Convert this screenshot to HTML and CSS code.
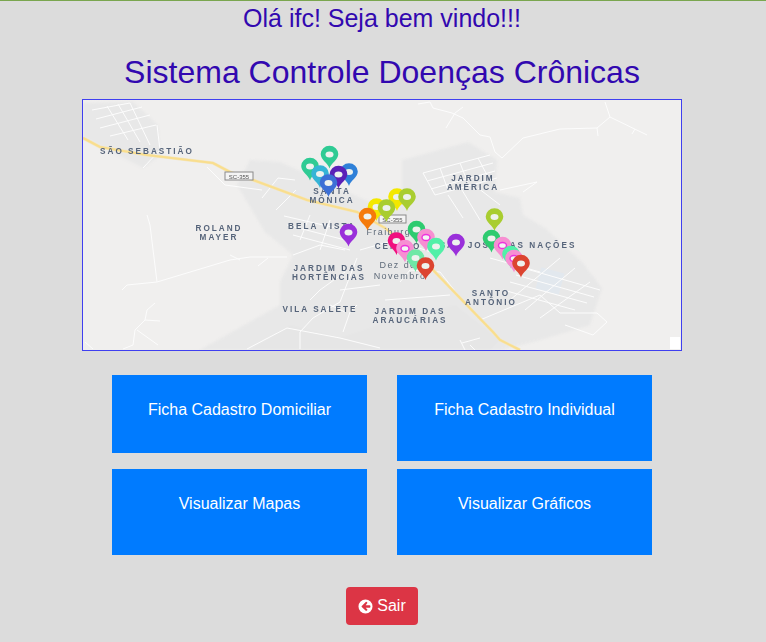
FILE: index.html
```html
<!DOCTYPE html>
<html lang="pt-BR">
<head>
<meta charset="utf-8">
<title>Sistema Controle Doenças Crônicas</title>
<link rel="stylesheet" href="styles.css">
</head>
<body>
<main class="page">
  <h2 class="welcome">Olá ifc! Seja bem vindo!!!</h2>
  <h1 class="title">Sistema Controle Doenças Crônicas</h1>
  <div class="map">
    <svg class="map-svg" viewBox="83 100 598 250" width="598" height="250" xmlns="http://www.w3.org/2000/svg">
      <defs>
        <path id="pin" d="M0 14C-1.500 8.500-8.800 5.500-8.800-.5A8.800 8.300 0 1 1 8.800-.5C8.800 5.500 1.500 8.500 0 14Z"/>
      </defs>
      <rect class="land" x="83" y="100" width="598" height="250"/>
      <g class="soft">
        <path class="zone" d="M83 103 133 102 158 125 161 155 143 168 83 138Z"/>
        <path class="zone" d="M237 185 250 160 280 162 370 202 402 200 402 160 468 142 497 160 495 192 520 198 523 215 545 228 582 262 602 288 590 325 540 340 500 350 200 350 280 305 280 282 293 255 265 232Z"/>
        <path class="zone2" d="M290 325 340 338 400 318 455 305 500 340 490 350 250 350Z"/>
      </g>
      <g class="blur">
        <rect class="pond" x="538" y="270" width="24" height="22" transform="rotate(15 550 281)"/>

        <g class="street">
          <path d="M92 110 130 103M96 119 142 107M100 128 150 115M110 136 156 125M107 106 128 140M118 104 140 142M130 103 150 145M157 125 160 150 143 168"/>
          <path d="M147 215 150 225 157 282M122 290 127 285 157 282 230 260 250 257 287 257M230 255 240 260M258 266 268 258"/>
          <path d="M155 303 147 310 145 320 160 321M145 320 135 330 133 345 123 349M137 330 158 345M85 342 93 349"/>
          <path d="M247 349 287 328 340 338 380 348M300 349 300 332 313 318 340 302 357 258M343 332 350 312 357 305M330 305 345 312M310 300 320 290 345 272"/>
          <path d="M207 167 225 185 262 190M262 198 278 178 295 180M276 210 296 190M287 225 345 240M293 235 350 250M284 216 345 230M310 215 300 240M330 220 320 250M293 255 320 245 345 250"/>
          <path d="M418 104 430 102 433 108 452 113 463 118 480 135 490 137 495 152 502 158M463 107 455 113 446 128"/>
          <path d="M502 158 523 138 560 129 597 128 610 117 605 102M610 117 647 135M635 129 632 134M597 128 598 136"/>
          <path d="M423 173 490 155M427 181 493 163M431 189 495 171M435 195 497 178M423 173 435 195M440 168 448 190M460 163 468 183M478 158 487 175M500 190 537 182 523 192M448 195 463 218M462 190 480 220M478 188 500 205"/>
          <path d="M523 268 600 290M516 275 594 297M510 282 587 303M503 290 575 310M490 258 540 272M560 258 510 300M575 268 525 310M590 282 540 318M480 320 540 295 560 313 597 313 607 322 593 335 565 325"/>
          <path d="M400 282 410 270 440 272 462 300M380 285 340 290M360 250 395 240 440 255M385 300 450 295M460 340 465 350M470 345 475 350M462 343 480 338"/>
        </g>
        <path class="road-edge" d="M83 138 100 147 147 155 213 163 230 172 253 180 280 190 307 200 357 212 385 228 410 248 433 270 460 298 493 332 500 340 520 350"/>
        <path class="road" d="M83 138 100 147 147 155 213 163 230 172 253 180 280 190 307 200 357 212 385 228 410 248 433 270 460 298 493 332 500 340 520 350"/>

        <g class="shield">
          <rect x="225" y="172" width="28" height="8"/>
          <rect x="379" y="215" width="27" height="8"/>
        </g>
        <text class="shield-text" x="239" y="178.500">SC-355</text>
        <text class="shield-text" x="392.500" y="221.500">SC-355</text>

        <g class="label">
          <text x="147" y="154">SÃO SEBASTIÃO</text>
          <text x="332" y="193.500">SANTA</text>
          <text x="332" y="203">MÔNICA</text>
          <text x="473" y="180.500">JARDIM</text>
          <text x="473" y="190">AMÉRICA</text>
          <text x="219" y="230.500">ROLAND</text>
          <text x="219" y="240">MAYER</text>
          <text x="322" y="229">BELA VISTA</text>
          <text x="398" y="249">CENTRO</text>
          <text x="508" y="248">SÃO JOSÉ DAS NAÇÕES</text>
          <text x="329" y="270.500">JARDIM DAS</text>
          <text x="329" y="280">HORTÊNCIAS</text>
          <text x="320" y="312">VILA SALETE</text>
          <text x="410" y="313.500">JARDIM DAS</text>
          <text x="410" y="323">ARAUCÁRIAS</text>
          <text x="491" y="295.500">SANTO</text>
          <text x="491" y="305">ANTÔNIO</text>
        </g>
        <g class="city">
          <text x="392" y="235">Fraiburgo</text>
          <text x="398" y="268">Dez de</text>
          <text x="400" y="278.500">Novembro</text>
        </g>
      </g>

      <g class="pins">
        <g class="p-teal" transform="translate(329.500 154.500)"><use href="#pin"/><ellipse rx="4" ry="3"/></g>
        <g class="p-teal" transform="translate(310 166.500)"><use href="#pin"/><ellipse rx="4" ry="3"/></g>
        <g class="p-cyan" transform="translate(320 174)"><use href="#pin"/><ellipse rx="4" ry="3"/></g>
        <g class="p-blue" transform="translate(349 172)"><use href="#pin"/><ellipse rx="4" ry="3"/></g>
        <g class="p-indigo" transform="translate(338.500 174.500)"><use href="#pin"/><ellipse rx="4" ry="3"/></g>
        <g class="p-azure" transform="translate(328.500 183)"><use href="#pin"/><ellipse rx="4" ry="3"/></g>
        <g class="p-yellow" transform="translate(397 197)"><use href="#pin"/><ellipse rx="4" ry="3"/></g>
        <g class="p-lime" transform="translate(407 197)"><use href="#pin"/><ellipse rx="4" ry="3"/></g>
        <g class="p-yellow" transform="translate(376.500 207)"><use href="#pin"/><ellipse rx="4" ry="3"/></g>
        <g class="p-lime" transform="translate(386.500 208)"><use href="#pin"/><ellipse rx="4" ry="3"/></g>
        <g class="p-orange" transform="translate(367.500 216.500)"><use href="#pin"/><ellipse rx="4" ry="3"/></g>
        <g class="p-purple" transform="translate(348.500 232.500)"><use href="#pin"/><ellipse rx="4" ry="3"/></g>
        <g class="p-lime" transform="translate(494.500 217)"><use href="#pin"/><ellipse rx="4" ry="3"/></g>
        <g class="p-green" transform="translate(416.500 229.500)"><use href="#pin"/><ellipse rx="4" ry="3"/></g>
        <g class="p-green" transform="translate(491.500 238.500)"><use href="#pin"/><ellipse rx="4" ry="3"/></g>
        <g class="p-pink" transform="translate(426 237.500)"><use href="#pin"/><ellipse rx="4" ry="3"/></g>
        <g class="p-purple" transform="translate(456 242.500)"><use href="#pin"/><ellipse rx="4" ry="3"/></g>
        <g class="p-hot" transform="translate(396.500 241)"><use href="#pin"/><ellipse rx="4" ry="3"/></g>
        <g class="p-pink" transform="translate(405 248.500)"><use href="#pin"/><ellipse rx="4" ry="3"/></g>
        <g class="p-mint" transform="translate(436 246.500)"><use href="#pin"/><ellipse rx="4" ry="3"/></g>
        <g class="p-pink" transform="translate(502.500 245.500)"><use href="#pin"/><ellipse rx="4" ry="3"/></g>
        <g class="p-mint" transform="translate(511 254.500)"><use href="#pin"/><ellipse rx="4" ry="3"/></g>
        <g class="p-pink" transform="translate(514 258.500)"><use href="#pin"/><ellipse rx="4" ry="3"/></g>
        <g class="p-seafoam" transform="translate(415.500 258)"><use href="#pin"/><ellipse rx="4" ry="3"/></g>
        <g class="p-red" transform="translate(425.500 266)"><use href="#pin"/><ellipse rx="4" ry="3"/></g>
        <g class="p-red" transform="translate(521 263.500)"><use href="#pin"/><ellipse rx="4" ry="3"/></g>
      </g>
      <rect class="corner" x="670" y="337" width="10" height="12"/>
    </svg>
  </div>

  <nav class="actions">
    <a class="action action-short" href="#">Ficha Cadastro Domiciliar</a>
    <a class="action" href="#">Ficha Cadastro Individual</a>
    <a class="action" href="#">Visualizar Mapas</a>
    <a class="action" href="#">Visualizar Gráficos</a>
  </nav>

  <a class="logout" href="#">
    <svg class="logout-icon" viewBox="0 0 16 16" width="15" height="15" xmlns="http://www.w3.org/2000/svg">
      <path d="M8 .5a7.500 7.500 0 1 0 0 15 7.500 7.500 0 0 0 0-15Zm4.500 8.800H8.200l1.600 1.600a.7.7 0 0 1 0 1l-.5.500a.7.7 0 0 1-1 0L4 8.500a.7.7 0 0 1 0-1L8.300 3.100a.7.7 0 0 1 1 0l.5.500a.7.7 0 0 1 0 1L8.200 6.700h4.300c.4 0 .7.3.7.7v1.200c0 .4-.3.7-.7.7Z"/>
    </svg>
    Sair
  </a>
</main>
</body>
</html>
```

FILE: styles.css
```css
* { box-sizing: border-box; }

html, body { height: 100%; }

body {
  margin: 0;
  background: #dcdcdc;
  border-top: 1px solid #7aa64f;
  font-family: "Liberation Sans", Arial, sans-serif;
  overflow: hidden;
}

.page {
  width: 600px;
  margin-left: 82px;
  display: flex;
  flex-direction: column;
  align-items: center;
}

.welcome {
  margin: 0;
  height: 35px;
  font-size: 25px;
  line-height: 35px;
  font-weight: 400;
  color: #3208b0;
  white-space: nowrap;
}

.title {
  margin: 11px 0 0;
  height: 52px;
  font-size: 32px;
  line-height: 50px;
  font-weight: 400;
  color: #3208b0;
  white-space: nowrap;
}

.map {
  width: 600px;
  height: 252px;
  border: 1px solid #3f3ff0;
  background: #f0efee;
}

.map-svg { display: block; }

.soft { filter: blur(1px); }
.blur { filter: blur(0.5px); }
.land { fill: #f0efee; }
.zone { fill: #e8e8e8; }
.zone2 { fill: #e6e6e6; }
.pond { fill: #e2e8ee; }
.corner { fill: #fff; }

.street {
  fill: none;
  stroke: #fcfcfc;
  stroke-width: 1;
}

.road-edge {
  fill: none;
  stroke: #f3e6c0;
  stroke-width: 3.200;
}

.road {
  fill: none;
  stroke: #f9de8e;
  stroke-width: 2;
}

.shield rect {
  fill: #f4f4f4;
  stroke: #8a8a8a;
  stroke-width: 1;
}

.shield-text {
  font-size: 6px;
  fill: #555;
  text-anchor: middle;
}

.label text {
  font-family: "Liberation Sans", Arial, sans-serif;
  font-size: 8.200px;
  font-weight: 700;
  letter-spacing: 2px;
  fill: #56647a;
  text-anchor: middle;
}

.city text {
  font-size: 9px;
  letter-spacing: 1.400px;
  fill: #5f6b7a;
  text-anchor: middle;
}

.pins { filter: blur(0.4px); }
.pins ellipse { fill: #eef2ee; }

.p-teal use { fill: #2fcb94; }
.p-cyan use { fill: #35b4d6; }
.p-blue use { fill: #2f80d8; }
.p-indigo use { fill: #5a20b8; }
.p-azure use { fill: #3c6fd6; }
.p-yellow use { fill: #f3e800; }
.p-lime use { fill: #a9cd30; }
.p-orange use { fill: #f57a0a; }
.p-purple use { fill: #9a30da; }
.p-green use { fill: #2ecb70; }
.p-pink use { fill: #f78fd2; }
.p-pink ellipse { fill: #f4f4f4; stroke: #ee33dd; stroke-width: 1.400; }
.p-hot use { fill: #f0107f; }
.p-mint use { fill: #52f0a8; }
.p-seafoam use { fill: #6fe8a6; }
.p-red use { fill: #dc4430; }

.actions {
  width: 540px;
  margin-top: 24px;
  display: grid;
  grid-template-columns: 255px 255px;
  column-gap: 30px;
  row-gap: 8px;
  align-items: start;
}

.action {
  display: block;
  height: 86px;
  padding-top: 23px;
  background: #007bff;
  color: #fff;
  font-size: 16px;
  line-height: 24px;
  text-align: center;
  text-decoration: none;
}

.action-short { height: 78px; }

.logout {
  margin-top: 32px;
  width: 72px;
  height: 38px;
  display: flex;
  align-items: center;
  justify-content: center;
  gap: 4px;
  background: #dc3545;
  border-radius: 4px;
  color: #fff;
  font-size: 16px;
  text-decoration: none;
}

.logout-icon { fill: #fff; }
```
